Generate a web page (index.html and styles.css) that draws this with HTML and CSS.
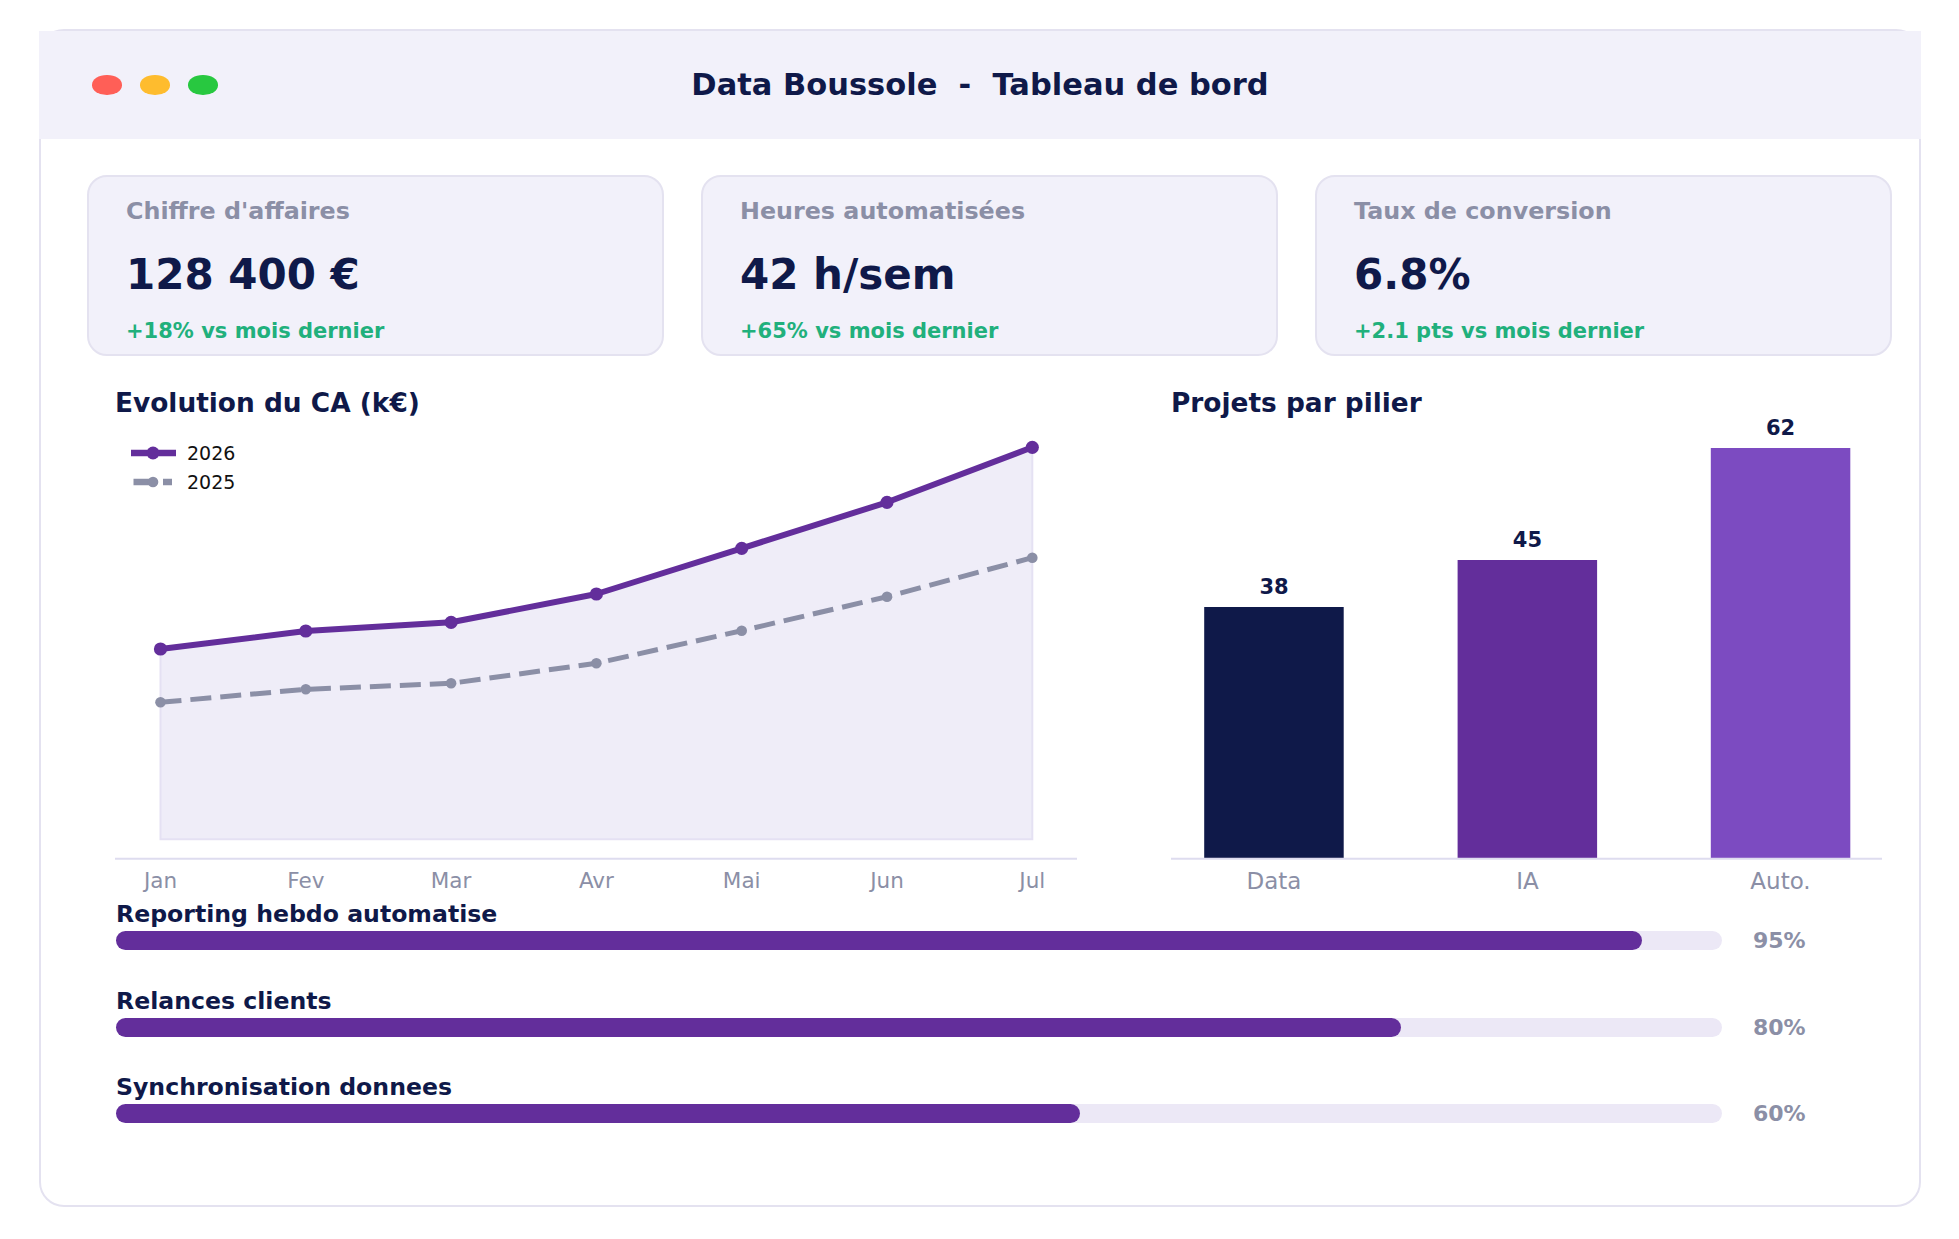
FILE: index.html
```html
<!DOCTYPE html>
<html lang="fr">
<head>
	<meta charset="UTF-8">
	<meta name="viewport" content="width=device-width, initial-scale=1.0">
	<title>Data Boussole - Tableau de bord</title>
	<link rel="stylesheet" href="styles.css">
</head>
<body>
	<div class="window">
		<header class="titlebar">
			<div class="dots">
				<span class="dot dot-red"></span>
				<span class="dot dot-yellow"></span>
				<span class="dot dot-green"></span>
			</div>
			<h1>Data Boussole  -  Tableau de bord</h1>
		</header>

		<section class="kpis">
			<div class="kpi">
				<div class="kpi-label">Chiffre d'affaires</div>
				<div class="kpi-value">128 400 €</div>
				<div class="kpi-delta">+18% vs mois dernier</div>
			</div>
			<div class="kpi">
				<div class="kpi-label">Heures automatisées</div>
				<div class="kpi-value">42 h/sem</div>
				<div class="kpi-delta">+65% vs mois dernier</div>
			</div>
			<div class="kpi">
				<div class="kpi-label">Taux de conversion</div>
				<div class="kpi-value">6.8%</div>
				<div class="kpi-delta">+2.1 pts vs mois dernier</div>
			</div>
		</section>

		<section class="charts">
			<div class="chart chart-line">
				<h2>Evolution du CA (k€)</h2>
				<svg width="962" height="490" viewBox="0 -10 962 490">
					<polygon class="area" points="45.5,231 190.8,213 336.1,204.3 481.4,176 626.7,130.3 772,84.3 917.3,29.3 917.3,421.3 45.5,421.3"/>
					<line class="axis" x1="0" y1="440.7" x2="962" y2="440.7"/>

					<polyline class="serie-2025" points="45.5,284.3 190.8,271.3 336.1,265.3 481.4,245.3 626.7,212.7 772,178.7 917.3,139.7"/>
					<g class="pts-2025">
						<circle cx="45.5" cy="284.3" r="5.3"/>
						<circle cx="190.8" cy="271.3" r="5.3"/>
						<circle cx="336.1" cy="265.3" r="5.3"/>
						<circle cx="481.4" cy="245.3" r="5.3"/>
						<circle cx="626.7" cy="212.7" r="5.3"/>
						<circle cx="772" cy="178.7" r="5.3"/>
						<circle cx="917.3" cy="139.7" r="5.3"/>
					</g>

					<polyline class="serie-2026" points="45.5,231 190.8,213 336.1,204.3 481.4,176 626.7,130.3 772,84.3 917.3,29.3"/>
					<g class="pts-2026">
						<circle cx="45.5" cy="231" r="6.6"/>
						<circle cx="190.8" cy="213" r="6.6"/>
						<circle cx="336.1" cy="204.3" r="6.6"/>
						<circle cx="481.4" cy="176" r="6.6"/>
						<circle cx="626.7" cy="130.3" r="6.6"/>
						<circle cx="772" cy="84.3" r="6.6"/>
						<circle cx="917.3" cy="29.3" r="6.6"/>
					</g>

					<!-- legend -->
					<line class="legend-2026" x1="16" y1="35" x2="61" y2="35"/>
					<circle class="legend-dot-2026" cx="38" cy="35" r="6.5"/>
					<text class="legend-text" x="72" y="42">2026</text>
					<path class="legend-2025" d="M18.5 64 H34 M48 64 H57"/>
					<circle class="legend-dot-2025" cx="38" cy="64" r="5.3"/>
					<text class="legend-text" x="72" y="70.7">2025</text>

					<g class="ticks">
						<text x="45.5" y="469.5">Jan</text>
						<text x="190.8" y="469.5">Fev</text>
						<text x="336.1" y="469.5">Mar</text>
						<text x="481.4" y="469.5">Avr</text>
						<text x="626.7" y="469.5">Mai</text>
						<text x="772" y="469.5">Jun</text>
						<text x="917.3" y="469.5">Jul</text>
					</g>
				</svg>
			</div>

			<div class="chart chart-bar">
				<h2>Projets par pilier</h2>
				<svg width="711" height="490" viewBox="0 -10 711 490">
					<rect class="bar-data" x="33.2" y="189" width="139.5" height="251.7"/>
					<rect class="bar-ia" x="286.6" y="142" width="139.5" height="298.7"/>
					<rect class="bar-auto" x="539.8" y="30" width="139.5" height="410.7"/>
					<line class="axis" x1="0" y1="440.7" x2="711" y2="440.7"/>

					<g class="bar-values">
						<text x="103" y="176">38</text>
						<text x="356.4" y="129">45</text>
						<text x="609.5" y="17">62</text>
					</g>
					<g class="bar-ticks">
						<text x="103" y="471">Data</text>
						<text x="356.4" y="471">IA</text>
						<text x="609.5" y="471">Auto.</text>
					</g>
				</svg>
			</div>
		</section>

		<section class="tasks">
			<div class="task">
				<div class="task-name">Reporting hebdo automatise</div>
				<div class="task-row">
					<div class="track"><div class="fill" style="width: 95%"></div></div>
					<span class="pct">95%</span>
				</div>
			</div>
			<div class="task">
				<div class="task-name">Relances clients</div>
				<div class="task-row">
					<div class="track"><div class="fill" style="width: 80%"></div></div>
					<span class="pct">80%</span>
				</div>
			</div>
			<div class="task">
				<div class="task-name">Synchronisation donnees</div>
				<div class="task-row">
					<div class="track"><div class="fill" style="width: 60%"></div></div>
					<span class="pct">60%</span>
				</div>
			</div>
		</section>
	</div>
</body>
</html>
```

FILE: styles.css
```css
* {
	box-sizing: border-box;
}
body {
	margin: 0;
	background: #fff;
	font-family: "DejaVu Sans", "Noto Sans", sans-serif;
	color: #0f1949;
}
.window {
	margin: 29px 0 0 39px;
	width: 1882px;
	height: 1178px;
	border: 2px solid #e4e2f0;
	border-radius: 25px;
}

/* title bar */
.titlebar {
	margin: 0 -2px;
	height: 108px;
	padding-bottom: 1px;
	background: #f2f1fa;
	display: grid;
	grid-template-columns: 1fr auto 1fr;
	align-items: center;
}
.dots {
	display: flex;
	gap: 18.5px;
	padding-left: 53px;
	margin-top: 1px;
}
.dot {
	width: 29.5px;
	height: 19.5px;
	border-radius: 50%;
}
.dot-red { background: #ff5f57; }
.dot-yellow { background: #febc2e; }
.dot-green { background: #28c840; }
.titlebar h1 {
	margin: 0;
	font-size: 30.5px;
	line-height: 35px;
	font-weight: bold;
	white-space: pre;
}

/* kpi cards */
.kpis {
	display: flex;
	gap: 37px;
	margin: 36px 0 0 46px;
}
.kpi {
	width: 577px;
	height: 181px;
	padding: 20px 0 0 37px;
	background: #f2f1fa;
	border: 2px solid #e4e2f0;
	border-radius: 20px;
}
.kpi-label {
	font-size: 23.8px;
	line-height: 28px;
	font-weight: bold;
	color: #8b8fa6;
}
.kpi-value {
	margin-top: 25px;
	font-size: 42px;
	line-height: 50px;
	font-weight: bold;
}
.kpi-delta {
	margin-top: 18.5px;
	font-size: 21px;
	line-height: 25px;
	font-weight: bold;
	color: #21b07c;
}

/* charts */
.charts {
	display: flex;
	gap: 94px;
	margin: 32px 0 0 74px;
}
.chart h2 {
	margin: 0 0 -10px;
	font-size: 26.4px;
	line-height: 30px;
	font-weight: bold;
}
.chart svg {
	display: block;
}
.chart-line { width: 962px; }
.chart-bar { width: 711px; }

.area {
	fill: #efedf8;
	stroke: #e5e1f3;
	stroke-width: 2;
}
.axis {
	stroke: #dedcef;
	stroke-width: 2;
}
.serie-2026 {
	fill: none;
	stroke: #632e9b;
	stroke-width: 6;
	stroke-linejoin: round;
}
.pts-2026 circle, .legend-dot-2026 { fill: #632e9b; }
.serie-2025 {
	fill: none;
	stroke: #8b8fa6;
	stroke-width: 5;
	stroke-dasharray: 21 9;
}
.pts-2025 circle, .legend-dot-2025 { fill: #8b8fa6; }
.legend-2026 {
	stroke: #632e9b;
	stroke-width: 6.5;
}
.legend-2025 {
	stroke: #8b8fa6;
	stroke-width: 6.5;
}
.legend-text {
	font-size: 19px;
	fill: #111;
}
.ticks text {
	font-size: 21.5px;
	fill: #8b8fa6;
	text-anchor: middle;
}

.bar-data { fill: #0f1949; }
.bar-ia { fill: #632e9b; }
.bar-auto { fill: #7c4bc1; }
.bar-values text {
	font-size: 21px;
	font-weight: bold;
	fill: #0f1949;
	text-anchor: middle;
}
.bar-ticks text {
	font-size: 23px;
	fill: #8b8fa6;
	text-anchor: middle;
}

/* progress */
.tasks {
	margin: 3px 0 0 75px;
}
.task + .task {
	margin-top: 37.5px;
}
.task-name {
	font-size: 23.6px;
	line-height: 27px;
	font-weight: bold;
}
.task-row {
	display: flex;
	align-items: center;
	gap: 31px;
	margin-top: 3px;
}
.track {
	width: 1606px;
	height: 19px;
	border-radius: 10px;
	background: #ece8f6;
}
.fill {
	height: 100%;
	border-radius: 10px;
	background: #632e9b;
}
.pct {
	font-size: 22px;
	line-height: 19px;
	font-weight: bold;
	color: #8b8fa6;
}
```
